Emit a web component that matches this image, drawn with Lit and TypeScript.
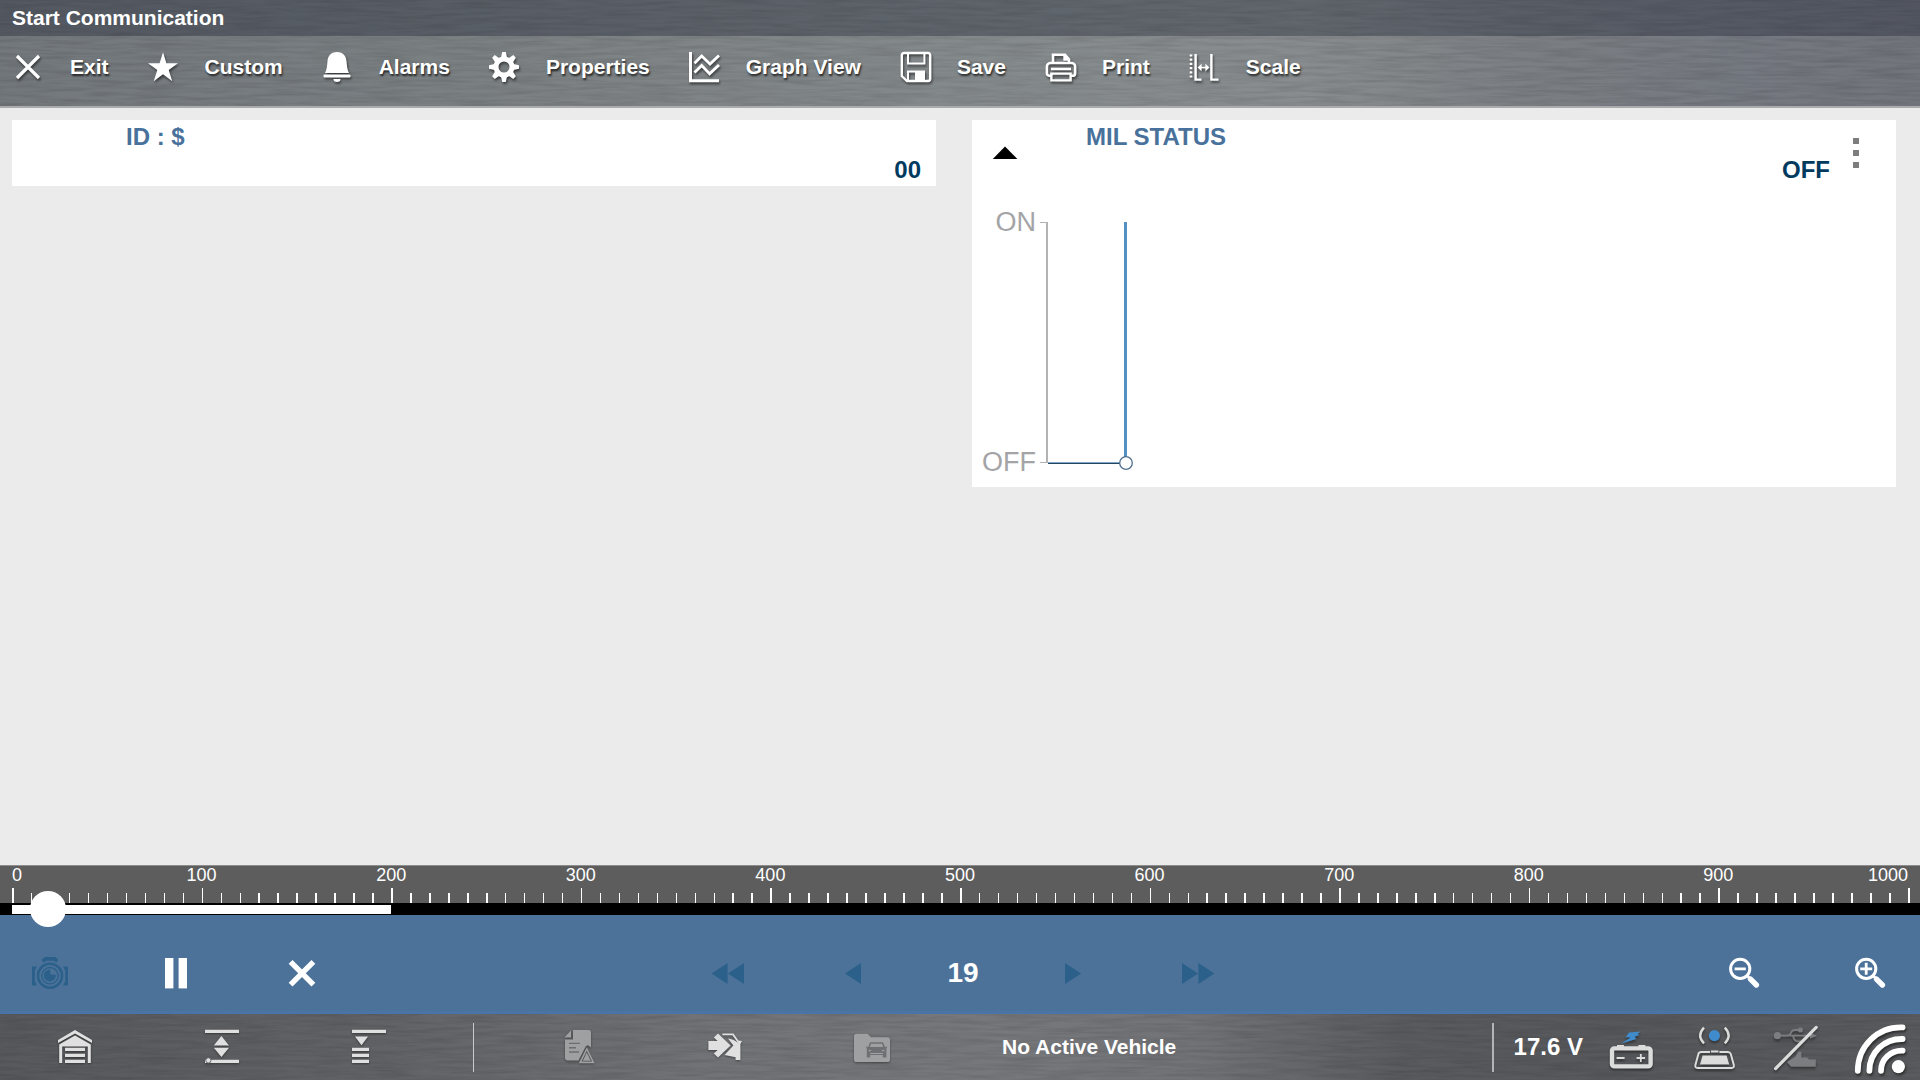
import { LitElement, html, svg, css } from "lit";
import { customElement, state } from "lit/decorators.js";

const gearTeeth = [0, 45, 90, 135, 180, 225, 270, 315];

const toolbarIcons = {
  exit: svg`<path class="line" stroke-width="3.2" d="M5 5L27 27M27 5L5 27"/>`,
  star: svg`<path class="solid" d="M16 1.2L19.4 12.2H31L21.7 18.9L25.3 30.2L16 23.2L6.7 30.2L10.3 18.9L1 12.2H12.6Z"/>`,
  bell: svg`<path class="solid" d="M4 22C6 18 6 15 6.5 10C7 4 11 1 16 1S25 4 25.5 10C26 15 26 18 28 22Z"/>
    <rect class="solid" x="2.5" y="23.6" width="27" height="2.8" rx="1"/><path class="solid" d="M12.5 28h7a3.5 3 0 0 1-7 0z"/>`,
  gear: svg`<circle class="line" cx="16" cy="16" r="8" stroke-width="5"/>
    ${gearTeeth.map((a) => svg`<path class="solid" d="M14.2 1h3.6l1.2 5.5h-6z" transform="rotate(${a} 16 16)"/>`)}`,
  graph: svg`<path class="line" stroke-width="3" d="M2.5 1V29.8H31"/>
    <path class="line" stroke-width="2.8" d="M6.5 12.3L13.7 5L22 13L31 4.6M6.5 21.6L13.7 14.6L21.6 22.8L31 14"/>`,
  save: svg`<path class="line" stroke-width="2.4" d="M5 2H29a2.2 2.2 0 0 1 2.2 2.2V27.8a2.2 2.2 0 0 1-2.2 2.2H8L2.8 25V4.2A2.2 2.2 0 0 1 5 2Z"/>
    <path class="line" stroke-width="2" d="M9 2V12.6H25.4V2M9 30V20.4H25V30"/><rect class="solid" x="16" y="20.4" width="8.6" height="10"/>`,
  print: svg`<path class="line" stroke-width="2.6" d="M9 12V3.8H21L25 8.2V12M20.6 4V8.4H25M9 12H6.2A3.4 3.4 0 0 0 2.9 15.4V22.2A2.6 2.6 0 0 0 5.5 24.8H7.2M25 12h2.8a3.4 3.4 0 0 1 3.3 3.4v6.8a2.6 2.6 0 0 1-2.6 2.6H26.8M9 12H25"/>
    <path class="line" stroke-width="2.4" d="M7 18H27M7.4 22.6H26.6V29.4H7.4Z"/>`,
  scale: svg`<path class="line" stroke-width="2.6" stroke-dasharray="2.2 2" d="M3 3.4V28.5"/>
    <path class="line" stroke-width="2.4" d="M7.6 3V28.6H13.5M23.4 3V28.6H30.5"/>
    <path class="line" stroke-width="1.6" d="M11 16.6H20"/><path class="solid" d="M9.6 16.6l4-3.8v7.6zM21.4 16.6l-4-3.8v7.6z"/>`,
};

const transportIcons = {
  camera: svg`<circle class="dimline" cx="20" cy="22.7" r="12" stroke-width="2.6"/>
    <circle class="dimline" cx="20" cy="22.7" r="8.2" stroke-width="1.4"/>
    <path class="dim" d="M20 16.4L20.6 21.6L25.8 21.8A6 6 0 1 1 20 16.4Z"/>
    <path class="dimline" stroke-width="3.6" d="M12.8 8.4L15.5 5.9H24.5L27.2 8.4"/>
    <path class="dim" d="M2 13.4H7L4.8 18V28L7 32.6H2ZM38 13.4H33L35.2 18V28L33 32.6H38Z"/>`,
  pause: svg`<rect class="white" x="9" y="5" width="8.4" height="30.4"/><rect class="white" x="22.6" y="5" width="8.4" height="30.4"/>`,
  close: svg`<path class="whiteline" stroke-width="5.4" d="M8.6 8.9L31.4 31.7M31.4 8.9L8.6 31.7"/>`,
  rewind: svg`<path class="dim" d="M20.6 10V31L4.6 20.5ZM37 10V31L21 20.5Z"/>`,
  prev: svg`<path class="dim" d="M28 10V31L12 20.5Z"/>`,
  next: svg`<path class="dim" d="M12 10V31L28 20.5Z"/>`,
  forward: svg`<path class="dim" d="M3 10V31L19 20.5ZM19.4 10V31L35.4 20.5Z"/>`,
  zoomOut: svg`<circle class="whiteline" cx="16.2" cy="15.8" r="9.6" stroke-width="3"/>
    <path class="whiteline" stroke-width="2.8" d="M10.6 15.8H21.8M22.8 22.4L26 25.6"/><path class="whiteline" stroke-width="5.4" stroke-linecap="round" d="M26.5 26.1L32.4 32"/>`,
  zoomIn: svg`<circle class="whiteline" cx="16.2" cy="15.8" r="9.6" stroke-width="3"/>
    <path class="whiteline" stroke-width="2.8" d="M10.2 15.8H22.2M16.2 9.8V21.8M22.8 22.4L26 25.6"/><path class="whiteline" stroke-width="5.4" stroke-linecap="round" d="M26.5 26.1L32.4 32"/>`,
};

const dockIcons = {
  garage: svg`<path d="M18 1L35 11V14L18 4.4L1 14V11Z"/><path d="M2.2 34V15.4L18 6.4L33.8 15.4V34H30.8V17.4H5.2V34Z"/>
    <path d="M8 18.8H28V22H8ZM8 24.8H28V28H8ZM8 30.8H28V34H8Z"/>`,
  expand: svg`<path d="M1 .8H35V4H1ZM1 30.8H35V34H1ZM17.4 7L25 16.6H9.8ZM17.4 28L9.8 18.8H25Z"/><circle cx="4.4" cy="31.4" r="2.6" stroke="#6a6b6e"/>`,
  collapse: svg`<path d="M1 .8H35V4H1ZM4 7.4H17L10.5 16.2ZM1 18.8H18V22H1ZM1 24.8H18V28H1ZM1 30.8H18V34H1Z"/>`,
  report: svg`<path d="M13 1H28.6A2.4 2.4 0 0 1 31 3.4V18.4L28 16.2L26 17L18.4 31.4H7.4A2.4 2.4 0 0 1 5 29V10.4H13Z"/>
    <path d="M4.4 8.4L11 1.6V8.4Z"/>
    <path fill="none" stroke="#6c6d70" stroke-width="1.4" d="M9 14.4H20M9 18.8H16M9 23H19"/>
    <path fill="none" stroke="#9fa0a2" stroke-width="1.6" d="M26.8 20L33.4 33.4H20.2Z"/><path d="M26.8 23.4L30.8 31.8H22.8Z"/>`,
  vehicle: svg`<path d="M1.4 12H10.6L6.8 8.4L11 4.4L23.6 16.4L11 28.4L6.8 24.6L10.6 21H1.4Z"/>
    <path fill="none" stroke="#e0e0e0" stroke-width="1.8" d="M15.4 5.4H26L31.4 13"/>
    <path d="M21 9.6C24 10 28 11.4 30.6 13.6L31.6 11.6L35 12L33.4 15V31H28.6V28.2L17.6 26L26.4 16.4Z"/>`,
  folder: svg`<path d="M2.6 4.8H13.6L17 8.2H33.4A2.6 2.6 0 0 1 36 10.8V30.4A2.6 2.6 0 0 1 33.4 33H2.6A2.6 2.6 0 0 1 0 30.4V7.4A2.6 2.6 0 0 1 2.6 4.8Z"/>
    <path fill="#6f7073" d="M16 13.2H29L31 18L33.4 17.4L32.4 19.4V28.4H28.8V26H16.2V28.4H12.8V19.4L11.8 17.4L14.2 18Z"/>
    <path d="M17 14.8H28L29.2 18H15.8ZM14.6 20.4L18 21.8L15 22.6ZM30.4 20.4L27 21.8L30 22.6ZM16 24H29V25H16Z"/>`,
};

const toolbar = [
  ["exit", "Exit"], ["star", "Custom"], ["bell", "Alarms"], ["gear", "Properties"],
  ["graph", "Graph View"], ["save", "Save"], ["print", "Print"], ["scale", "Scale"],
] as const;

const textureLayer = (id: string) => html`
  <svg class="texture" aria-hidden="true">
    <filter id=${id} x="0" y="0" width="100%" height="100%">
      <feTurbulence type="fractalNoise" baseFrequency="0.022 0.3" numOctaves="3" seed="7"/>
      <feColorMatrix values="0 0 0 0 0  0 0 0 0 0  0 0 0 0 0  1.4 0 0 0 -0.5"/>
    </filter>
    <rect width="100%" height="100%" filter="url(#${id})"/>
  </svg>`;

@customElement("app-root")
export class AppRoot extends LitElement {
  @state() private frame = 19;

  static styles = css`
    :host {
      display: flex;
      flex-direction: column;
      min-height: 100vh;
      overflow-x: clip;
      background: #ebebeb;
      color: #fff;
      font-family: "Liberation Sans", Arial, sans-serif;
    }
    * { box-sizing: border-box; }
    button {
      margin: 0;
      padding: 0;
      border: 0;
      background: none;
      color: inherit;
      font: inherit;
      cursor: pointer;
    }
    button:disabled { cursor: default; }
    svg { display: block; flex: none; }
    h1, h2, p { margin: 0; font: inherit; }

    .metal { position: relative; isolation: isolate; }
    .texture {
      position: absolute;
      inset: 0;
      z-index: -1;
      width: 100%;
      height: 100%;
      opacity: 0.15;
    }

    .header {
      background: linear-gradient(90deg, #73787c 0%, #7b8083 25%, #868b8d 55%, #888c8e 68%, #7b7f83 80%, #757981 90%, #72757c 100%);
      border-bottom: 2px solid #a9abac;
    }
    .title {
      height: 36px;
      padding: 0 12px;
      background: rgba(28, 34, 50, 0.36);
      font-size: 21px;
      font-weight: bold;
      line-height: 36px;
    }
    .toolbar {
      display: flex;
      height: 70px;
      padding-bottom: 8px;
    }
    .tool {
      display: flex;
      align-items: center;
      gap: 14px;
      padding-right: 26px;
      font-size: 21px;
      font-weight: bold;
      line-height: 24px;
      text-shadow: 1px 2px 2px rgba(0, 0, 0, 0.7);
      white-space: nowrap;
    }
    .tool svg {
      width: 56px;
      height: 32px;
      filter: drop-shadow(1px 2px 1px rgba(0, 0, 0, 0.5));
    }
    .solid { fill: #fff; }
    .line { fill: none; stroke: #fff; }

    .cards {
      flex: 1;
      display: grid;
      grid-template-columns: 1fr 1fr;
      align-items: start;
      gap: 36px;
      padding: 12px 24px 12px 12px;
    }
    .card { background: #fff; }
    .card-head {
      display: flex;
      height: 66px;
    }
    .card-lead { width: 114px; padding-left: 20px; }
    .card-text {
      flex: 1;
      display: flex;
      flex-direction: column;
      padding-right: 15px;
      font-size: 24px;
      font-weight: bold;
      line-height: 33px;
    }
    .name { color: #48719b; }
    .reading { color: #003a5f; text-align: right; }
    .card-menu { width: 51px; }
    .collapse { height: 66px; }
    .menu-dots {
      display: flex;
      justify-content: center;
      align-items: center;
      height: 66px;
      width: 22px;
    }
    .chart { width: 100%; height: 301px; }
    .chart text { fill: #a4a4a6; font-size: 27px; text-anchor: end; }

    .timeline { background: #5d5d5d; border-top: 1px solid #8c8c8c; }
    .labels {
      display: flex;
      justify-content: space-between;
      padding: 0 12px;
      font-size: 18px;
      line-height: 18px;
    }
    .label { display: flex; justify-content: center; width: 0; }
    .label:first-child { justify-content: flex-start; }
    .label:last-child { justify-content: flex-end; }
    .ticks { height: 19px; padding: 0 12px; }
    .ticks svg { width: 100%; height: 19px; overflow: visible; }
    .track {
      position: relative;
      height: 12px;
      padding: 2px 12px 1px;
      background: #000;
    }
    .recorded { height: 9px; background: #fff; }
    .seek {
      position: absolute;
      left: -6px;
      top: -12px;
      width: calc(100% + 12px);
      height: 36px;
      margin: 0;
      appearance: none;
      background: none;
    }
    .seek::-webkit-slider-thumb {
      appearance: none;
      width: 36px;
      height: 36px;
      border-radius: 50%;
      background: #fff;
    }

    .transport {
      display: grid;
      grid-template-columns: 1fr auto 1fr;
      height: 99px;
      padding-top: 19px;
      background: #4c7299;
      border-bottom: 3px solid #4a73a8;
    }
    .group { display: flex; align-items: center; }
    .group-middle { padding-left: 6px; }
    .group-end { justify-content: flex-end; }
    .key {
      display: flex;
      align-items: center;
      justify-content: center;
      width: 100px;
      height: 77px;
    }
    .key svg { width: 40px; height: 40px; }
    .spaced { margin-right: 26px; }
    .frame {
      width: 120px;
      font-size: 28px;
      font-weight: bold;
      line-height: 32px;
      text-align: center;
    }
    .white { fill: #fff; }
    .whiteline { fill: none; stroke: #fff; }
    .dim { fill: #2a6089; }
    .dimline { fill: none; stroke: #2a6089; }

    .dock {
      display: flex;
      align-items: center;
      height: 66px;
      padding: 0 11px 0 1px;
      background: linear-gradient(90deg, #58595c 0%, #626366 20%, #737477 38%, #77787b 52%, #727376 62%, #5a5b5e 73%, #57585b 85%, #5a5b5e 100%);
    }
    .dock-key {
      display: flex;
      justify-content: center;
      align-items: center;
      width: 147px;
      height: 66px;
      fill: #e0e0e0;
    }
    .dock-key:disabled { fill: #9fa0a2; }
    .dock-key svg {
      width: 36px;
      height: 36px;
      filter: drop-shadow(0 1px 1px rgba(0, 0, 0, 0.4));
    }
    .rule { width: 1px; height: 49px; margin: 0 30px 0 31px; background: #c9c9cb; }
    .vehicle {
      padding-left: 57px;
      font-size: 21px;
      font-weight: bold;
      line-height: 24px;
    }
    .status {
      display: flex;
      align-items: center;
      gap: 34px;
      margin-left: auto;
    }
    .power { display: flex; align-items: center; }
    .power-rule { width: 2px; height: 49px; margin-right: 20px; background: #b4b4b6; }
    .volts {
      margin-right: 24px;
      font-size: 24px;
      font-weight: bold;
      line-height: 28px;
      white-space: nowrap;
    }
    .indicator {
      width: 48px;
      height: 48px;
      filter: drop-shadow(0 2px 1px rgba(0, 0, 0, 0.4));
    }
    .signal {
      width: 56px;
      height: 56px;
      filter: drop-shadow(1px 2px 1px rgba(0, 0, 0, 0.5));
    }
  `;

  private key(icon: keyof typeof transportIcons, label: string, opts: { disabled?: boolean; spaced?: boolean } = {}) {
    return html`<button class="key ${opts.spaced ? "spaced" : ""}" aria-label=${label} ?disabled=${opts.disabled ?? false}>
      <svg viewBox="0 0 40 40" aria-hidden="true">${transportIcons[icon]}</svg>
    </button>`;
  }

  private dockKey(icon: keyof typeof dockIcons, label: string, disabled = false) {
    return html`<button class="dock-key" aria-label=${label} ?disabled=${disabled}>
      <svg viewBox="0 0 36 36" aria-hidden="true">${dockIcons[icon]}</svg>
    </button>`;
  }

  private seek(e: Event) {
    this.frame = Number((e.target as HTMLInputElement).value);
  }

  render() {
    const marks = Array.from({ length: 11 }, (_, i) => i * 100);
    const ticks = Array.from({ length: 101 }, (_, i) => i);
    return html`
      <header class="header metal">
        ${textureLayer("grain-top")}
        <h1 class="title">Start Communication</h1>
        <nav class="toolbar">
          ${toolbar.map(([icon, label]) => html`<button class="tool">
            <svg viewBox="0 0 32 32" aria-hidden="true">${toolbarIcons[icon]}</svg><span>${label}</span>
          </button>`)}
        </nav>
      </header>

      <main class="cards">
        <section class="card">
          <div class="card-head">
            <div class="card-lead"></div>
            <div class="card-text"><h2 class="name">ID : $</h2><p class="reading">00</p></div>
          </div>
        </section>
        <section class="card">
          <div class="card-head">
            <div class="card-lead">
              <button class="collapse" aria-label="Collapse">
                <svg width="26" height="16" viewBox="0 0 26 16"><path d="M13 1.6L25.4 14H.8Z"/></svg>
              </button>
            </div>
            <div class="card-text"><h2 class="name">MIL STATUS</h2><p class="reading">OFF</p></div>
            <div class="card-menu">
              <button class="menu-dots" aria-label="Options">
                <svg width="8" height="32" viewBox="0 0 8 32" fill="#7d7d7d"><path d="M1 1H7V7H1ZM1 13H7V19H1ZM1 25H7V31H1Z"/></svg>
              </button>
            </div>
          </div>
          <svg class="chart" role="img" aria-label="MIL STATUS">
            <text x="64" y="45">ON</text><text x="64" y="285">OFF</text>
            <path d="M68 36.5H75M68 276.5H75" stroke="#b3b3b3"/>
            <path d="M75 36V277" stroke="#b3b3b3" stroke-width="2"/>
            <path d="M76 276.5H148" stroke="#7fa6c6"/><path d="M76 277.5H148" stroke="#24475f"/>
            <path d="M153.5 36V271" stroke="#5590c2" stroke-width="3"/>
            <circle cx="154" cy="277" r="6.3" fill="#fff" stroke="#4f6f90" stroke-width="1.3"/>
          </svg>
        </section>
      </main>

      <section class="timeline">
        <div class="labels">${marks.map((m) => html`<span class="label">${m}</span>`)}</div>
        <div class="ticks">
          <svg aria-hidden="true" shape-rendering="crispEdges">
            ${ticks.map((t) => svg`<rect x="${t}%" y=${t % 10 ? 9 : 4} width="1.5" height=${t % 10 ? 10 : 15} fill="#fff"/>`)}
          </svg>
        </div>
        <div class="track">
          <div class="recorded" style="width: 20%"></div>
          <input class="seek" type="range" min="0" max="1000" aria-label="Frame" .value=${String(this.frame)} @input=${this.seek}>
        </div>
      </section>

      <section class="transport">
        <div class="group">
          ${this.key("camera", "Snapshot", { disabled: true, spaced: true })}
          ${this.key("pause", "Pause", { spaced: true })}
          ${this.key("close", "Clear")}
        </div>
        <div class="group group-middle">
          ${this.key("rewind", "Rewind", { disabled: true, spaced: true })}
          ${this.key("prev", "Previous frame", { disabled: true })}
          <output class="frame">${this.frame}</output>
          ${this.key("next", "Next frame", { disabled: true, spaced: true })}
          ${this.key("forward", "Fast forward", { disabled: true })}
        </div>
        <div class="group group-end">
          ${this.key("zoomOut", "Zoom out", { spaced: true })}
          ${this.key("zoomIn", "Zoom in")}
        </div>
      </section>

      <footer class="dock metal">
        ${textureLayer("grain-bottom")}
        ${this.dockKey("garage", "Home")}
        ${this.dockKey("expand", "Expand all")}
        ${this.dockKey("collapse", "Collapse all")}
        <div class="rule"></div>
        ${this.dockKey("report", "Trouble code report", true)}
        ${this.dockKey("vehicle", "Select vehicle")}
        ${this.dockKey("folder", "Vehicle files", true)}
        <p class="vehicle">No Active Vehicle</p>
        <div class="status">
          <div class="power">
            <div class="power-rule"></div>
            <span class="volts">17.6 V</span>
            <svg class="indicator" viewBox="0 0 48 48" aria-hidden="true">
              <path fill="#3f8bcb" d="M34 8.4L22 9.4L18.6 14.2L23.4 14.4L14.4 20.4L29.6 16L27.6 13.8L32.6 12L30.4 10.8Z"/>
              <rect x="5" y="25.4" width="38.6" height="18" rx="2.4" fill="none" stroke="#dcdcdc" stroke-width="4.4"/>
              <path fill="#dcdcdc" d="M10 22H17V25H10ZM31.4 22H38.4V25H31.4Z"/>
              <path stroke="#dcdcdc" stroke-width="1.8" d="M9.6 35H17.6M29.6 35H38M33.8 31V39"/>
            </svg>
          </div>
          <svg class="indicator" viewBox="0 0 48 48" aria-hidden="true">
            <circle cx="25.4" cy="12.6" r="5.6" fill="#3f8bcb"/>
            <path fill="none" stroke="#dcdcdc" stroke-width="2.4" d="M15 4.6Q7.4 12.6 15 20.4M35.8 4.6Q43.4 12.6 35.8 20.4"/>
            <path fill="none" stroke="#dcdcdc" stroke-width="2" d="M21 29H12.4Q10 29 9.4 31L6.4 42Q5.8 45 8.6 45H42.6Q45.4 45 44.8 42L41.8 31Q41 29 38.8 29H30.4M22 28.4H29.4"/>
            <path fill="#dcdcdc" d="M13.6 32.4H37.6L40.2 41.4H11Z"/>
          </svg>
          <svg class="indicator" viewBox="0 0 48 48" aria-hidden="true">
            <g fill="#7c7d80"><circle cx="6.4" cy="12.7" r="3.6"/><circle cx="29.4" cy="7" r="2.6"/>
              <path d="M46 12.7L39 9.6V15.8ZM16 39L24 34L27.6 28.6L30.4 29V34.4H36L38 36.4H44.8V43.8H20Z"/></g>
            <path fill="none" stroke="#7c7d80" stroke-width="1.8" d="M8 12.7H42M16 12.7Q19 12.7 20 9.8Q21 7 24 7H29M22 12.7Q23 18.4 27 18.4H33"/>
            <path stroke="#dcdcdc" stroke-width="3.2" stroke-linecap="round" d="M45.2 4.4L4.6 45.6"/>
          </svg>
          <svg class="signal" viewBox="0 0 56 56" aria-hidden="true">
            <g fill="none" stroke="#fff" stroke-width="5.8" stroke-linecap="round">
              <path d="M49.6 8.4C24 7.6 4.8 27.6 4.8 51.8M49.6 20C31 19.6 16.4 33.6 16.4 51.8M49.6 31.6C38 31.2 28 40 28 51.8"/>
            </g>
            <circle cx="45.4" cy="47.6" r="6.6" fill="#fff"/>
          </svg>
        </div>
      </footer>
    `;
  }
}
